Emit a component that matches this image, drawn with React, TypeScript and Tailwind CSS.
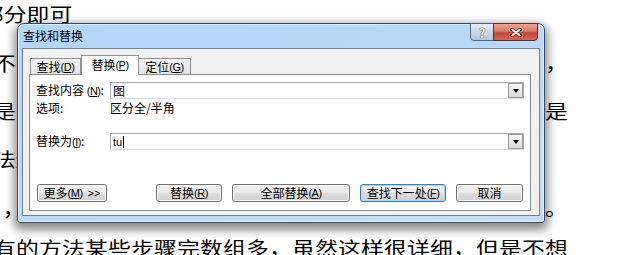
import React from 'react'

// mnemonic like (N) with underlined letter
function Key({ k }: { k: string }) {
  return (
    <span className="font-['Liberation_Sans','Noto_Sans_CJK_SC',sans-serif] text-[11px] tracking-[-0.5px]">
      (<span className="underline underline-offset-1">{k}</span>)
    </span>
  )
}

function Combo({ children }: { children?: React.ReactNode }) {
  return (
    <div className="relative flex h-[17px] w-[414px] items-center border border-[#a4abb4] border-b-[#d5dbe2] bg-white pl-[2px] text-[12px] leading-[14px]">
      {children}
      <div className="absolute right-0 top-0 flex h-full w-[15px] items-center justify-center border border-[#9c9c9c] bg-gradient-to-b from-[#f6f6f6] to-[#d9d9d9]">
        <div className="h-0 w-0 border-x-[3.5px] border-t-[4px] border-x-transparent border-t-black" />
      </div>
    </div>
  )
}

function Btn({ w, focus, children }: { w: string; focus?: boolean; children: React.ReactNode }) {
  return (
    <div
      className={`flex h-[18px] items-center justify-center rounded-[3px] border bg-[linear-gradient(#f3f3f3,#ececec_45%,#dedede_50%,#d0d0d0)] text-[12px] leading-[14px] ${w} ${
        focus
          ? 'border-[#3c7fb1] shadow-[inset_0_0_0_1px_#a6d5f5]'
          : 'border-[#707070] shadow-[inset_0_0_0_1px_#fbfbfb]'
      }`}
    >
      {children}
    </div>
  )
}

export default function App() {
  const line = 'text-justify [text-align-last:justify]'

  return (
    <div className="relative h-[255px] w-[620px] overflow-hidden bg-white font-['Noto_Sans_CJK_SC',sans-serif]">
      {/* document text behind the dialog */}
      <div className="-ml-[7px] -mt-[10px] w-[479px] origin-left scale-x-[1.2] text-[19px] leading-[48px] text-black">
        <div className="-ml-[10px] mb-[1px]">部分即可</div>
        <div className={line}>不需要全部替换的时候，也可以先查找再逐个进行替换，</div>
        <div className={line}>是否使用通配符等等，这些都可以根据需要来设置，只是</div>
        <div className="mb-[1px]">法还有很多种，这里只介绍最常用的一种方法</div>
        <div className={`${line} -mb-[8px] pl-[8px]`}>，然后点击全部替换按钮，就可以一次性完成替换了。</div>
        <div className={line}>有的方法某些步骤完数组多，虽然这样很详细，但是不想</div>
      </div>

      {/* find & replace dialog */}
      <div className="absolute left-[17px] top-[23px] flex h-[200px] w-[528px] flex-col rounded-t-[7px] rounded-b-[3px] border border-[#3a4a5c] bg-gradient-to-br from-[#b4d5f7] via-[#bad8f7] to-[#c9dff3] px-[4px] pb-[6px] text-[12px] text-black shadow-[inset_0_0_0_1px_rgba(255,255,255,0.55),0_4px_10px_3px_rgba(0,0,0,0.45)]">
        <div className="flex h-[24px] items-center pl-[1px] leading-[14px]">查找和替换</div>

        <div className="absolute -top-px right-[6px] flex">
          <div className="flex h-[18px] w-[24px] items-center justify-center rounded-bl-[4px] border border-[#56677b] bg-gradient-to-b from-[#e6edf5] to-[#b6c5d6] text-[13px] font-bold leading-none text-white [text-shadow:0_0_1px_#3c4c5e,0_0_1px_#3c4c5e]">
            ?
          </div>
          <div className="-ml-px flex h-[18px] w-[45px] items-center justify-center rounded-br-[4px] border border-[#6a2a22] bg-[linear-gradient(#e9a898,#d9786a_45%,#c4473a_55%,#d06a5a)]">
            <svg width="12" height="9" viewBox="0 0 12 9">
              <path d="M2 1.5 L10 7.5 M10 1.5 L2 7.5" stroke="#4a1a14" strokeWidth="3.4" strokeLinecap="round" />
              <path d="M2 1.5 L10 7.5 M10 1.5 L2 7.5" stroke="#ffffff" strokeWidth="1.8" strokeLinecap="round" />
            </svg>
          </div>
        </div>

        <div className="flex-1 border border-[#6f8296] bg-[#f0f0f0]">
          {/* tabs */}
          <div className="relative z-10 -mb-px ml-[7px] mt-[6px] flex h-[20px] items-end leading-[14px]">
            <div className="mb-px flex h-[16px] w-[51px] items-center justify-center border border-b-0 border-[#8e9096] bg-gradient-to-b from-[#f4f4f4] to-[#e3e3e3]">
              查找<Key k="D" />
            </div>
            <div className="flex h-[20px] w-[58px] items-center justify-center border border-b-0 border-[#8e9096] bg-white pb-[2px]">
              替换<Key k="P" />
            </div>
            <div className="mb-px flex h-[16px] w-[52px] items-center justify-center border border-b-0 border-l-0 border-[#8e9096] bg-gradient-to-b from-[#f4f4f4] to-[#e3e3e3]">
              定位<Key k="G" />
            </div>
          </div>

          {/* panel */}
          <div className="ml-[6px] flex h-[137px] w-[502px] flex-col border border-[#898c95] bg-white pl-[6px] leading-[14px]">
            <div className="mt-[7px] flex items-center">
              <div className="w-[74px]">
                查找内容 <Key k="N" />:
              </div>
              <Combo>图</Combo>
            </div>
            <div className="mt-[2px] flex">
              <div className="w-[74px]">选项:</div>
              <div>区分全/半角</div>
            </div>
            <div className="mt-[18px] flex items-center">
              <div className="w-[74px]">
                替换为<Key k="I" />:
              </div>
              <Combo>
                <span className="font-['Liberation_Sans',sans-serif] text-[11px]">tu</span>
                <span className="ml-px h-[12px] w-px bg-black" />
              </Combo>
            </div>
            <div className="mt-[34px] flex">
              <Btn w="w-[70px] ml-px">
                更多<Key k="M" />
                <span className="ml-[5px] font-['Liberation_Sans',sans-serif] text-[11px]">&gt;&gt;</span>
              </Btn>
              <div className="ml-[49px] flex gap-[10px]">
                <Btn w="w-[66px]">
                  替换<Key k="R" />
                </Btn>
                <Btn w="w-[118px]">
                  全部替换<Key k="A" />
                </Btn>
                <Btn w="w-[86px]" focus>
                  查找下一处<Key k="F" />
                </Btn>
                <Btn w="w-[67px]">取消</Btn>
              </div>
            </div>
          </div>
        </div>
      </div>
    </div>
  )
}
